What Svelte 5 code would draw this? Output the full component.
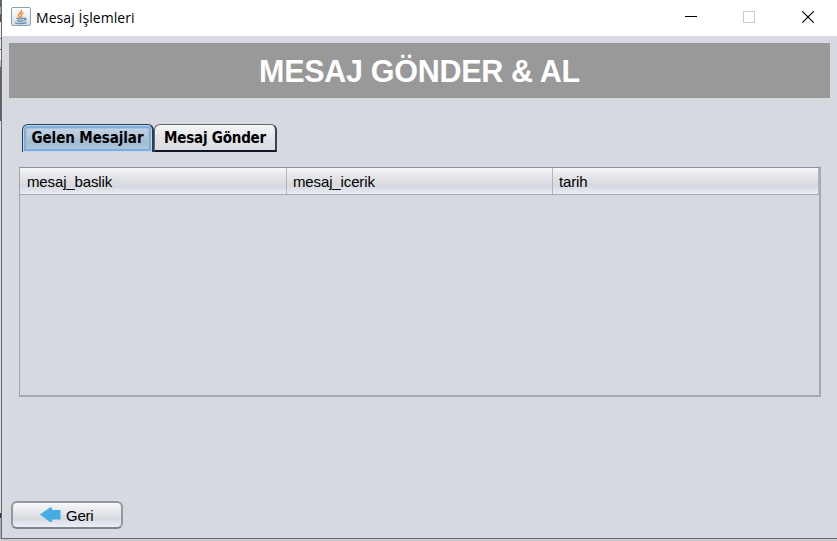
<script>
  const columns = ['mesaj_baslik', 'mesaj_icerik', 'tarih'];
  const tabs = ['Gelen Mesajlar', 'Mesaj Gönder'];
  let active = $state(0);
</script>

<div class="desktop">
  <div class="window">
    <header>
      <svg class="java" width="20" height="20" viewBox="0 0 20 20">
        <defs>
          <linearGradient id="tile" x1="0" y1="0" x2="0" y2="1">
            <stop offset="0" stop-color="#fff" />
            <stop offset="1" stop-color="#d5dee5" />
          </linearGradient>
        </defs>
        <rect x=".5" y=".5" width="19" height="18" rx="1.5" fill="url(#tile)" stroke="#8fa0ae" />
        <path d="M10.500 3C11.500 5 7 6.300 7.500 8.500C7.700 9.700 9 10.200 9 11M12.500 5.800C10.500 6.500 9.500 7.500 10.300 8.500C11 9.500 10.700 10 10.200 10.700" fill="none" stroke="#ef8d3c" stroke-width="1.600" />
        <path d="M5.500 11.200C7 12.200 11.500 12 13 11.200M6 13.300C8 14.300 11 14.200 12.500 13.300M13 11.500C15.500 10.800 15.500 13 13 13.500M4 15.500C6 17 13 17 15.500 15.300" fill="none" stroke="#6c91ac" stroke-width="1.500" />
      </svg>
      <span class="caption">Mesaj İşlemleri</span>
      <svg class="controls" width="130" height="12" viewBox="0 0 130 12" fill="none">
        <path d="M0 5.500H12" stroke="#000" />
        <rect x="58.500" y=".5" width="11" height="11" stroke="#ccc" />
        <path d="M117.300 .3L128.700 11.700M128.700 .3L117.300 11.700" stroke="#000" stroke-width="1.100" />
      </svg>
    </header>
    <main>
      <h1><span>MESAJ GÖNDER &amp; AL</span></h1>
      <div class="tabs">
        {#each tabs as tab, i}
          <button class="tab" class:active={active === i} class:second={i === 1} onclick={() => (active = i)}><span>{tab}</span></button>
        {/each}
      </div>
      <div class="table">
        <div class="head">
          {#each columns as column}
            <div class="cell">{column}</div>
          {/each}
        </div>
      </div>
      <button class="back">
        <svg width="21" height="16" viewBox="0 0 21 16"><path d="M0 7.500L10 .5H12V3H20.500V12.500H12V15H10Z" fill="#45ade0" /></svg>
        <span>Geri</span>
      </button>
    </main>
  </div>
</div>

<style>
  :global(body) { overflow: hidden; }
  * { box-sizing: border-box; }
  .desktop {
    width: 837px;
    height: 541px;
    padding-left: 1px;
    background:
      linear-gradient(#50687c 0 7px, #9ba5af 7px 14px, #555 14px 22px, #eee 22px 38px, #777 38px 39px, #e8e8e8 39px 49px, #555 49px 50px, #f2f2f2 50px 60px, #bbb 60px 67px, #606060 67px 121px, #ddd 121px 513px, #333 513px 518px, #aaa 518px) 0 0 / 1px 539px no-repeat,
      #c9c9c9;
  }
  .window {
    width: 836px;
    height: 539px;
    border-left: 1px solid #68696d;
    border-bottom: 1px solid #68696d;
    background: #d6d9e0;
    font-family: "Liberation Sans", Arial, sans-serif;
    color: #000;
  }
  header {
    display: flex;
    height: 36px;
    padding: 7px 0 0 9px;
    background: #fff;
  }
  .caption {
    width: 625px;
    margin-left: 5px;
    font: 14px/21px "Open Sans", "Noto Sans", sans-serif;
    letter-spacing: .06px;
    white-space: nowrap;
  }
  .java, .controls { flex: none; }
  .controls { margin: 4px 0 0 24px; }
  main { display: flex; flex-direction: column; align-items: flex-start; padding: 7px 7px 0; }
  h1 {
    width: 821px;
    height: 55px;
    margin: 0;
    background: #999;
    color: #fff;
    text-align: center;
    font-size: 30.5px;
    font-weight: bold;
    letter-spacing: -.3px;
    line-height: 56px;
  }
  .tabs { display: flex; height: 28px; margin: 26px 0 0 13px; }
  .tab {
    height: 28px;
    padding: 2px 0 0;
    border: 1px solid #65666b;
    border-bottom: 2px solid #111827;
    border-right: 2px solid #3d424c;
    border-radius: 6px 6px 0 0;
    background: linear-gradient(#f4f5f7, #e1e3e8 55%, #d8dbe2);
    color: #000;
    font: bold 15px/23px "DejaVu Sans Condensed", "DejaVu Sans", sans-serif;
    font-stretch: condensed;
    letter-spacing: -.08px;
    white-space: nowrap;
  }
  .tab.second { width: 123px; letter-spacing: -.2px; }
  .tab:not(.second) { width: 132px; }
  .tab.active {
    border: 1px solid #2b3d51;
    border-right-width: 2px;
    border-bottom: 0;
    padding: 2px 0;
    background: linear-gradient(#c7d8e8, #b2c5d7 45%, #a3bad0 60%, #b3cce2);
    box-shadow: inset 0 0 0 1px #c0d7ec, inset 0 0 0 3px #7fadd9, inset 0 0 0 4px #a4c4e0;
  }
  .table {
    width: 802px;
    height: 230px;
    margin: 15px 0 0 10px;
    border: 1px solid #a2a5ad;
    border-top-color: #8e9199;
    border-right: 2px solid #a5a9b1;
    border-bottom: 2px solid #a5a9b1;
  }
  .head {
    display: flex;
    height: 27px;
    border-bottom: 1px solid #a5a8b1;
    background: linear-gradient(#f6f7f8, #e5e6e9 30%, #dfe0e3 50%, #d6d8dd 70%, #e9edf6);
  }
  .cell {
    width: 266px;
    padding-left: 6px;
    border-right: 1px solid #b3b6bc;
    font-size: 15px;
    letter-spacing: -.13px;
    line-height: 27px;
  }
  .cell:first-child { width: 267px; padding-left: 7px; }
  .back {
    display: flex;
    width: 112px;
    height: 28px;
    margin: 104px 0 0 2px;
    padding: 3px 0 0 27px;
    border: 2px solid #94979d;
    border-bottom-color: #80838a;
    border-radius: 6px;
    background: linear-gradient(#f7f8fa, #e4e6ea 40%, #d6d9df 65%, #eceff5);
    color: #000;
    font: 15px/20px "Liberation Sans", Arial, sans-serif;
    letter-spacing: -.25px;
  }
  .back svg { flex: none; margin-top: 1px; }
  .back span { margin-left: 5px; }
</style>
